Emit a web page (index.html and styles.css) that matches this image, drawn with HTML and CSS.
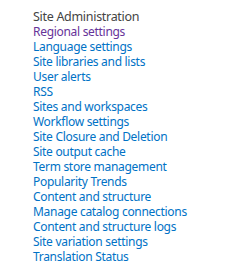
FILE: index.html
```html
<!DOCTYPE html>
<html>
<head>
<meta charset="utf-8">
<link rel="stylesheet" href="styles.css">
</head>
<body>
<div class="panel">
  <h3 class="title">Site Administration</h3>
  <ul class="links">
    <li><a class="visited" href="#">Regional settings</a></li>
    <li><a href="#">Language settings</a></li>
    <li><a href="#">Site libraries and lists</a></li>
    <li><a href="#">User alerts</a></li>
    <li><a href="#">RSS</a></li>
    <li><a href="#">Sites and workspaces</a></li>
    <li><a href="#">Workflow settings</a></li>
    <li><a href="#">Site Closure and Deletion</a></li>
    <li><a href="#">Site output cache</a></li>
    <li><a href="#">Term store management</a></li>
    <li><a href="#">Popularity Trends</a></li>
    <li><a href="#">Content and structure</a></li>
    <li><a href="#">Manage catalog connections</a></li>
    <li><a href="#">Content and structure logs</a></li>
    <li><a href="#">Site variation settings</a></li>
    <li><a href="#">Translation Status</a></li>
  </ul>
</div>
</body>
</html>
```
FILE: styles.css
```css
html, body {
  margin: 0;
  padding: 0;
  background: #ffffff;
}
.panel {
  padding: 9px 0 0 33px;
  font-family: "Noto Sans", "Open Sans", sans-serif;
  font-size: 12px;
  letter-spacing: -0.3px;
  line-height: 15px;
}
.title {
  margin: 0;
  font-size: 12.5px;
  font-weight: normal;
  color: #444444;
  line-height: 15px;
}
.links {
  list-style: none;
  margin: 0;
  padding: 0;
}
.links li {
  margin: 0;
  padding: 0;
}
.links a {
  color: #0072c6;
  text-decoration: none;
}
.links a.visited {
  color: #663399;
}
```
